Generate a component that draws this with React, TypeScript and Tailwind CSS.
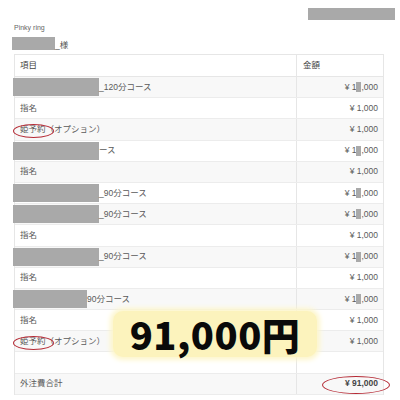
import React from "react";

type Row = {
  kind: "course" | "plain" | "hime" | "empty" | "total";
  boxW?: number;
  text?: string;
  amount: string;
  redacted?: boolean;
};

const rows: Row[] = [
  { kind: "course", boxW: 86, text: "_120分コース", amount: "", redacted: true },
  { kind: "plain", text: "指名", amount: "¥ 1,000" },
  { kind: "hime", amount: "¥ 1,000" },
  { kind: "course", boxW: 86, text: "ース", amount: "", redacted: true },
  { kind: "plain", text: "指名", amount: "¥ 1,000" },
  { kind: "course", boxW: 86, text: "_90分コース", amount: "", redacted: true },
  { kind: "course", boxW: 86, text: "_90分コース", amount: "", redacted: true },
  { kind: "plain", text: "指名", amount: "¥ 1,000" },
  { kind: "course", boxW: 86, text: "_90分コース", amount: "", redacted: true },
  { kind: "plain", text: "指名", amount: "¥ 1,000" },
  { kind: "course", boxW: 74, text: "90分コース", amount: "", redacted: true },
  { kind: "plain", text: "指名", amount: "¥ 1,000" },
  { kind: "hime", amount: "¥ 1,000" },
  { kind: "empty", amount: "" },
  { kind: "total", text: "外注費合計", amount: "¥ 91,000" },
];

function Amount({ row }: { row: Row }) {
  if (row.redacted) {
    return (
      <span className="flex items-center">
        <span>¥ 1</span>
        <span className="inline-block w-[5px] h-[10px] bg-[#a9a9a9]" />
        <span>,000</span>
      </span>
    );
  }
  if (row.kind === "total") {
    return <span className="font-bold text-[#444]">{row.amount}</span>;
  }
  return <span>{row.amount}</span>;
}

export default function App() {
  return (
    <div
      className="relative w-[400px] h-[400px] bg-white overflow-hidden text-[#5a5a5a]"
      style={{ fontFamily: '"Liberation Sans", "Noto Sans CJK JP", sans-serif' }}
    >
      <div className="flex justify-end pt-[8px] pr-[5px]">
        <div className="w-[87px] h-[12px] bg-[#a9a9a9]" />
      </div>
      <div className="pl-[14px] mt-[3px] text-[7px] leading-[9px] text-[#666]">Pinky ring</div>
      <div className="flex items-end pl-[12px] mt-[5px] h-[13px]">
        <div className="w-[43px] h-[13px] bg-[#a9a9a9]" />
        <span className="text-[8.5px] leading-[10px] text-[#555]">_様</span>
      </div>

      <div className="ml-[14px] mt-[4px] w-[370px] border-t border-l border-r border-[#e6e6e6]">
        <div className="flex h-[22px] border-b border-[#e6e6e6] bg-white text-[8.5px] text-[#444]">
          <div className="flex-1 flex items-center pl-[5px] border-r border-[#e6e6e6]">項目</div>
          <div className="w-[86px] flex items-center pl-[6px]">金額</div>
        </div>
        {rows.map((row, i) => (
          <div
            key={i}
            className={`flex h-[21.2px] border-b border-[#ececec] text-[8.5px] ${
              i % 2 === 0 ? "bg-[#f8f8f8]" : "bg-white"
            }`}
          >
            <div className="relative flex-1 flex items-center pl-[5px] border-r border-[#e6e6e6]">
              {row.kind === "course" && (
                <>
                  <span
                    className="inline-block h-[18px] bg-[#a9a9a9] -ml-[7px]"
                    style={{ width: row.boxW }}
                  />
                  <span>{row.text}</span>
                </>
              )}
              {(row.kind === "plain" || row.kind === "total") && <span>{row.text}</span>}
              {row.kind === "hime" && (
                <>
                  <span>姫予約（オプション）</span>
                  <span className="absolute left-[-2px] top-[5px] w-[41px] h-[14px] rounded-[50%] border border-[#b52a35]" />
                </>
              )}
            </div>
            <div className="relative w-[86px] flex items-center justify-end pr-[5px]">
              <Amount row={row} />
              {row.kind === "total" && (
                <span className="absolute left-[25px] top-[2px] w-[68px] h-[18px] rounded-[50%] border border-[#b52a35]" />
              )}
            </div>
          </div>
        ))}
      </div>

      <div className="absolute left-[113px] top-[311px] w-[204px] h-[46px] rounded-[10px] bg-[#fcf3bd] shadow-[0_0_5px_3px_#fdf6cc] flex items-center justify-center">
        <span
          className="text-[38px] leading-none font-black text-[#0a0a0a] tracking-[0.5px]"
          style={{ fontFamily: '"Noto Sans CJK JP", sans-serif' }}
        >
          91,000円
        </span>
      </div>
    </div>
  );
}
